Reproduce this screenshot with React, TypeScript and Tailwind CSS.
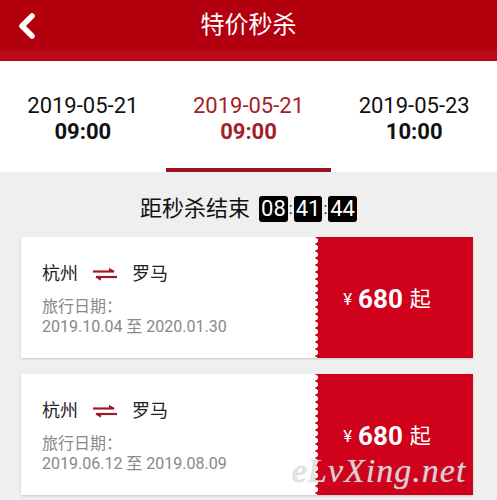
import React from "react";

const FONT = "Roboto, 'Noto Sans CJK SC', sans-serif";

function SwapIcon() {
  return (
    <svg width="26" height="14" viewBox="0 0 26 14" className="mx-[14px]">
      <path d="M1 4.5H22" stroke="#9b1b2a" strokeWidth="2.2" />
      <path d="M17 0.8L23 4.5L17 4.5Z" fill="#9b1b2a" />
      <path d="M25 10H4" stroke="#9b1b2a" strokeWidth="2.2" />
      <path d="M9 13.7L3 10L9 10Z" fill="#9b1b2a" />
    </svg>
  );
}

function Card({ range }: { range: string }) {
  return (
    <div className="ml-[21px] mr-[24px] flex h-[121px] bg-white shadow-[0_1px_2px_rgba(0,0,0,0.18)]">
      <div className="flex-1 pl-[21px] pt-[25px]">
        <div className="flex items-center text-[18px] leading-[24px] text-[#222]">
          <span>杭州</span>
          <SwapIcon />
          <span>罗马</span>
        </div>
        <div className="mt-[11px] text-[16px] leading-[20px] text-[#888]">旅行日期：</div>
        <div className="text-[16px] leading-[20px] text-[#888]">{range}</div>
      </div>
      <div className="relative flex w-[158px] items-center justify-center bg-[#d0021b] pr-[14px] pt-[3px] text-white">
        <div className="absolute left-0 top-0 bottom-0 w-[3px] bg-[radial-gradient(circle_at_0_50%,#fff_2.8px,transparent_3.3px)] bg-[length:3px_7px]" />
        <span className="text-[17px] leading-none">¥</span>
        <span className="ml-[6px] text-[26px] font-bold leading-none">680</span>
        <span className="ml-[7px] text-[21px] leading-none">起</span>
      </div>
    </div>
  );
}

export default function App() {
  const tabs = [
    { d: "2019-05-21", t: "09:00", active: false },
    { d: "2019-05-21", t: "09:00", active: true },
    { d: "2019-05-23", t: "10:00", active: false },
  ];
  return (
    <div className="relative h-[500px] w-[497px] overflow-hidden bg-[#efefef]" style={{ fontFamily: FONT }}>
      {/* header */}
      <div className="flex h-[61px] flex-col">
        <div className="relative flex h-[51px] items-center justify-center bg-[#b3000f]">
          <svg width="20" height="26" viewBox="0 0 20 26" className="absolute left-[17px] top-[13px]">
            <path d="M15 3L5 13L15 23" fill="none" stroke="#fff" strokeWidth="5.5" strokeLinecap="round" strokeLinejoin="round" />
          </svg>
          <span className="mt-[-2px] text-[24px] leading-none text-white">特价秒杀</span>
        </div>
        <div className="h-[10px] bg-[#bd0a19]" />
      </div>

      {/* tabs */}
      <div className="grid h-[111px] grid-cols-3 bg-white">
        {tabs.map((tab, i) => (
          <div key={i} className="flex flex-col items-center pt-[32px]">
            <div className={`text-[22px] leading-[26px] ${tab.active ? "text-[#a31d2c]" : "text-[#111]"}`}>{tab.d}</div>
            <div className={`text-[22px] font-bold leading-[26px] ${tab.active ? "text-[#a31d2c]" : "text-[#111]"}`}>{tab.t}</div>
            <div className="flex-1" />
            {tab.active ? <div className="h-[4px] w-full bg-[#9a1020]" /> : null}
          </div>
        ))}
      </div>

      {/* countdown */}
      <div className="flex h-[65px] items-center justify-center pt-[9px] text-[22px] text-[#111]">
        <span className="leading-none">距秒杀结束</span>
        <span className="ml-[9px] flex h-[26px] items-center rounded-[3px] bg-black px-[2px] leading-none text-white">08</span>
        <span className="mx-[1px] text-[16px] leading-none">:</span>
        <span className="flex h-[26px] items-center rounded-[3px] bg-black px-[2px] leading-none text-white">41</span>
        <span className="mx-[1px] text-[16px] leading-none">:</span>
        <span className="flex h-[26px] items-center rounded-[3px] bg-black px-[2px] leading-none text-white">44</span>
      </div>

      {/* cards */}
      <div className="flex flex-col gap-[16px]">
        <Card range="2019.10.04 至 2020.01.30" />
        <Card range="2019.06.12 至 2019.08.09" />
      </div>

      {/* watermark */}
      <div
        className="pointer-events-none absolute left-[292px] top-[454px] text-[34px] italic leading-none tracking-[1px] text-[#e4e4e4] opacity-90"
        style={{ fontFamily: "'Liberation Serif', serif", textShadow: "0 0 1px #999" }}
      >
        eLvXing.net
      </div>
    </div>
  );
}
